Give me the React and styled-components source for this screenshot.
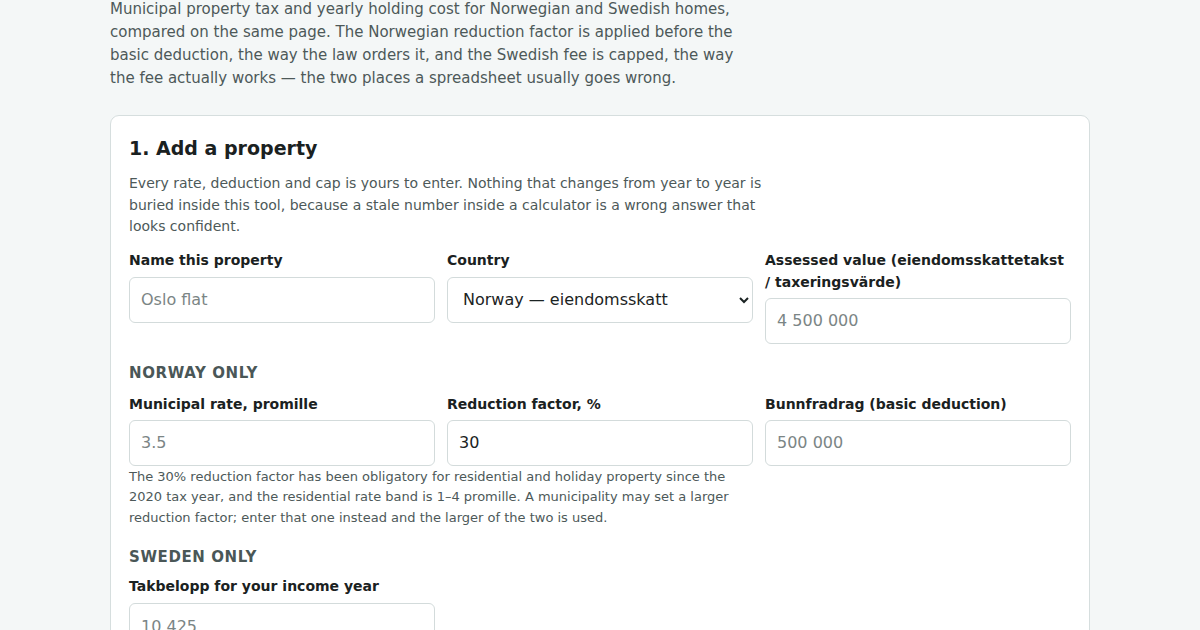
import React from "react";
import styled, { createGlobalStyle } from "styled-components";

const Global = createGlobalStyle`
  html, body { margin: 0; padding: 0; }
  body {
    background: #f4f7f7;
    font-family: "DejaVu Sans", sans-serif;
    color: #1b2323;
  }
`;

const Page = styled.main`
  width: 980px;
  margin: 0 auto;
  padding-bottom: 40px;
`;

const Intro = styled.p`
  margin: -2px 0 0;
  max-width: 640px;
  font-size: 15px;
  line-height: 23px;
  color: #4d5959;
`;

const Card = styled.section`
  margin-top: 25px;
  background: #ffffff;
  border: 1px solid #d6dede;
  border-radius: 9px;
  padding: 18px 18px 24px;
`;

const Title = styled.h2`
  margin: 0;
  font-size: 19px;
  line-height: 28px;
  font-weight: 700;
  color: #1a2121;
`;

const Desc = styled.p`
  margin: 11px 0 0;
  max-width: 640px;
  font-size: 14px;
  line-height: 21.5px;
  color: #4d5959;
`;

const Grid = styled.div`
  display: grid;
  grid-template-columns: repeat(${(p) => p.$cols || 3}, 1fr);
  column-gap: 12px;
  margin-top: ${(p) => p.$mt || 0}px;
  align-items: start;
`;

const Field = styled.label`
  display: flex;
  flex-direction: column;
  gap: ${(p) => p.$gap ?? 6}px;
`;

const Label = styled.span`
  font-size: 14px;
  line-height: 22px;
  font-weight: 700;
  color: #1a2121;
`;

const inputBase = `
  box-sizing: border-box;
  width: 100%;
  height: 46px;
  border: 1px solid #d3dbdb;
  border-radius: 6px;
  background: #fff;
  font-family: "DejaVu Sans", sans-serif;
  font-size: 16px;
  color: #1b2323;
  outline: none;
`;

const Input = styled.input`
  ${inputBase}
  padding: 0 11px;
  &::placeholder { color: #7b8585; }
`;

const Select = styled.select`
  ${inputBase}
  padding: 0 11px;
`;

const Section = styled.h3`
  margin: ${(p) => p.$mt || 20}px 0 0;
  font-size: 15px;
  line-height: 22px;
  font-weight: 700;
  letter-spacing: 0.6px;
  text-transform: uppercase;
  color: #4a5757;
`;

const Hint = styled.p`
  margin: 1px 0 0;
  max-width: 610px;
  font-size: 13px;
  line-height: 20.5px;
  color: #4d5959;
`;

export default function App() {
  return (
    <>
      <Global />
      <Page>
        <Intro>
          Municipal property tax and yearly holding cost for Norwegian and Swedish homes,
          compared on the same page. The Norwegian reduction factor is applied before the
          basic deduction, the way the law orders it, and the Swedish fee is capped, the way
          the fee actually works — the two places a spreadsheet usually goes wrong.
        </Intro>
        <Card>
          <Title>1. Add a property</Title>
          <Desc>
            Every rate, deduction and cap is yours to enter. Nothing that changes from year to
            year is buried inside this tool, because a stale number inside a calculator is a
            wrong answer that looks confident.
          </Desc>
          <Grid $mt={11}>
            <Field>
              <Label>Name this property</Label>
              <Input placeholder="Oslo flat" />
            </Field>
            <Field>
              <Label>Country</Label>
              <Select defaultValue="no">
                <option value="no">Norway — eiendomsskatt</option>
                <option value="se">Sweden — kommunal fastighetsavgift</option>
              </Select>
            </Field>
            <Field $gap={5}>
              <Label>Assessed value (eiendomsskattetakst / taxeringsvärde)</Label>
              <Input placeholder="4 500 000" />
            </Field>
          </Grid>
          <Section $mt={18}>Norway only</Section>
          <Grid $mt={9}>
            <Field $gap={5}>
              <Label>Municipal rate, promille</Label>
              <Input placeholder="3.5" />
            </Field>
            <Field $gap={5}>
              <Label>Reduction factor, %</Label>
              <Input defaultValue="30" />
            </Field>
            <Field $gap={5}>
              <Label>Bunnfradrag (basic deduction)</Label>
              <Input placeholder="500 000" />
            </Field>
          </Grid>
          <Hint>
            The 30% reduction factor has been obligatory for residential and holiday property
            since the 2020 tax year, and the residential rate band is 1–4 promille. A
            municipality may set a larger reduction factor; enter that one instead and the
            larger of the two is used.
          </Hint>
          <Section $mt={18}>Sweden only</Section>
          <Grid $mt={7}>
            <Field>
              <Label>Takbelopp for your income year</Label>
              <Input placeholder="10 425" />
            </Field>
          </Grid>
        </Card>
      </Page>
    </>
  );
}
